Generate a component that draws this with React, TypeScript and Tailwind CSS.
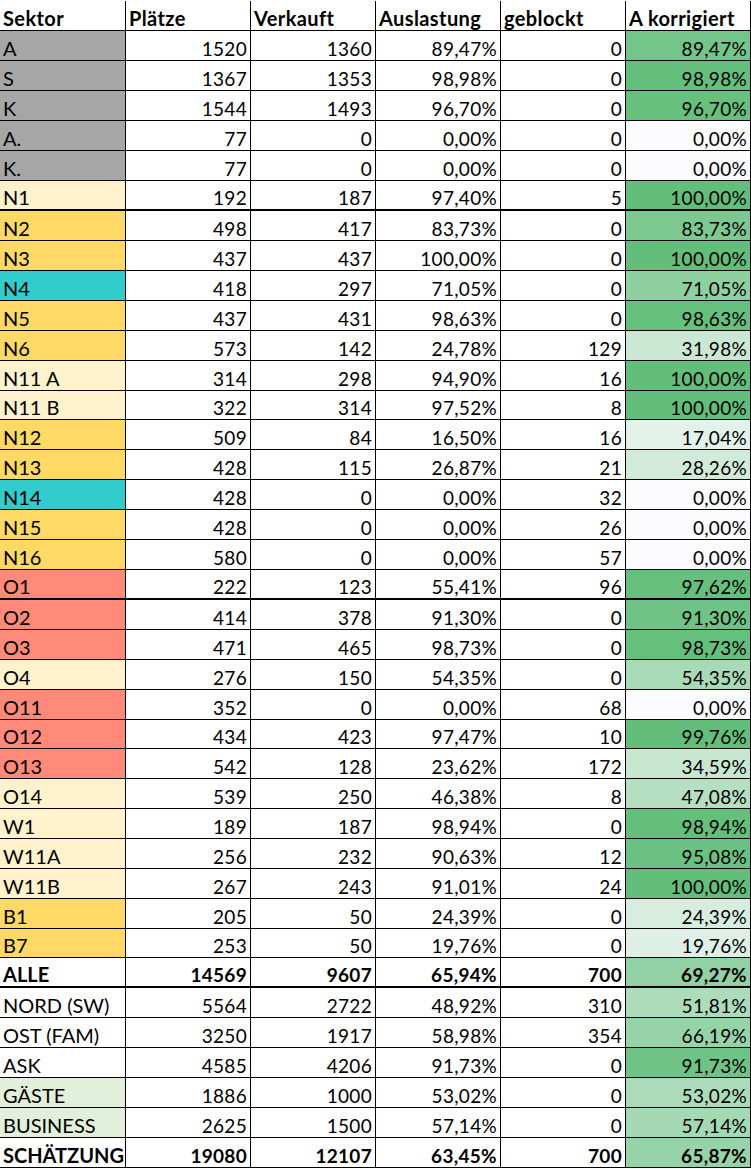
// Seat occupancy sheet per sector, laid out like the exported spreadsheet range.

type Row = {
  s: string;
  p: string;
  v: string;
  a: string;
  g: string;
  k: string;
  kv: number;
  fill?: string;
  bold?: boolean;
  thick?: boolean;
  short?: boolean;
};

const GREY = 'bg-[#a6a6a6]';
const CREAM = 'bg-[#fff2cc]';
const GOLD = 'bg-[#ffd966]';
const TEAL = 'bg-[#33cccc]';
const SALMON = 'bg-[#ff8a7a]';
const MINT = 'bg-[#e2efda]';

const rows: Row[] = [
  { s: 'A', p: '1520', v: '1360', a: '89,47%', g: '0', k: '89,47%', kv: 89.47, fill: GREY },
  { s: 'S', p: '1367', v: '1353', a: '98,98%', g: '0', k: '98,98%', kv: 98.98, fill: GREY },
  { s: 'K', p: '1544', v: '1493', a: '96,70%', g: '0', k: '96,70%', kv: 96.7, fill: GREY },
  { s: 'A.', p: '77', v: '0', a: '0,00%', g: '0', k: '0,00%', kv: 0, fill: GREY },
  { s: 'K.', p: '77', v: '0', a: '0,00%', g: '0', k: '0,00%', kv: 0, fill: GREY },
  { s: 'N1', p: '192', v: '187', a: '97,40%', g: '5', k: '100,00%', kv: 100, fill: CREAM, thick: true },
  { s: 'N2', p: '498', v: '417', a: '83,73%', g: '0', k: '83,73%', kv: 83.73, fill: GOLD },
  { s: 'N3', p: '437', v: '437', a: '100,00%', g: '0', k: '100,00%', kv: 100, fill: GOLD },
  { s: 'N4', p: '418', v: '297', a: '71,05%', g: '0', k: '71,05%', kv: 71.05, fill: TEAL },
  { s: 'N5', p: '437', v: '431', a: '98,63%', g: '0', k: '98,63%', kv: 98.63, fill: GOLD },
  { s: 'N6', p: '573', v: '142', a: '24,78%', g: '129', k: '31,98%', kv: 31.98, fill: GOLD },
  { s: 'N11 A', p: '314', v: '298', a: '94,90%', g: '16', k: '100,00%', kv: 100, fill: CREAM },
  { s: 'N11 B', p: '322', v: '314', a: '97,52%', g: '8', k: '100,00%', kv: 100, fill: CREAM, short: true },
  { s: 'N12', p: '509', v: '84', a: '16,50%', g: '16', k: '17,04%', kv: 17.04, fill: GOLD },
  { s: 'N13', p: '428', v: '115', a: '26,87%', g: '21', k: '28,26%', kv: 28.26, fill: GOLD },
  { s: 'N14', p: '428', v: '0', a: '0,00%', g: '32', k: '0,00%', kv: 0, fill: TEAL },
  { s: 'N15', p: '428', v: '0', a: '0,00%', g: '26', k: '0,00%', kv: 0, fill: GOLD },
  { s: 'N16', p: '580', v: '0', a: '0,00%', g: '57', k: '0,00%', kv: 0, fill: GOLD },
  { s: 'O1', p: '222', v: '123', a: '55,41%', g: '96', k: '97,62%', kv: 97.62, fill: SALMON, thick: true },
  { s: 'O2', p: '414', v: '378', a: '91,30%', g: '0', k: '91,30%', kv: 91.3, fill: SALMON },
  { s: 'O3', p: '471', v: '465', a: '98,73%', g: '0', k: '98,73%', kv: 98.73, fill: SALMON },
  { s: 'O4', p: '276', v: '150', a: '54,35%', g: '0', k: '54,35%', kv: 54.35, fill: CREAM },
  { s: 'O11', p: '352', v: '0', a: '0,00%', g: '68', k: '0,00%', kv: 0, fill: SALMON },
  { s: 'O12', p: '434', v: '423', a: '97,47%', g: '10', k: '99,76%', kv: 99.76, fill: SALMON, short: true },
  { s: 'O13', p: '542', v: '128', a: '23,62%', g: '172', k: '34,59%', kv: 34.59, fill: SALMON },
  { s: 'O14', p: '539', v: '250', a: '46,38%', g: '8', k: '47,08%', kv: 47.08, fill: CREAM },
  { s: 'W1', p: '189', v: '187', a: '98,94%', g: '0', k: '98,94%', kv: 98.94, fill: CREAM },
  { s: 'W11A', p: '256', v: '232', a: '90,63%', g: '12', k: '95,08%', kv: 95.08, fill: CREAM },
  { s: 'W11B', p: '267', v: '243', a: '91,01%', g: '24', k: '100,00%', kv: 100, fill: CREAM },
  { s: 'B1', p: '205', v: '50', a: '24,39%', g: '0', k: '24,39%', kv: 24.39, fill: GOLD },
  { s: 'B7', p: '253', v: '50', a: '19,76%', g: '0', k: '19,76%', kv: 19.76, fill: GOLD, short: true },
  { s: 'ALLE', p: '14569', v: '9607', a: '65,94%', g: '700', k: '69,27%', kv: 69.27, bold: true, thick: true },
  { s: 'NORD (SW)', p: '5564', v: '2722', a: '48,92%', g: '310', k: '51,81%', kv: 51.81 },
  { s: 'OST (FAM)', p: '3250', v: '1917', a: '58,98%', g: '354', k: '66,19%', kv: 66.19 },
  { s: 'ASK', p: '4585', v: '4206', a: '91,73%', g: '0', k: '91,73%', kv: 91.73 },
  { s: 'GÄSTE', p: '1886', v: '1000', a: '53,02%', g: '0', k: '53,02%', kv: 53.02, fill: MINT },
  { s: 'BUSINESS', p: '2625', v: '1500', a: '57,14%', g: '0', k: '57,14%', kv: 57.14, fill: MINT },
  { s: 'SCHÄTZUNG', p: '19080', v: '12107', a: '63,45%', g: '700', k: '65,87%', kv: 65.87, bold: true },
];

// Excel's white → green colour scale, 0 % to 100 %.
function scale(pct: number) {
  const t = Math.min(Math.max(pct / 100, 0), 1);
  const mix = (from: number, to: number) => Math.round(from + (to - from) * t);
  return `rgb(${mix(252, 99)}, ${mix(252, 190)}, ${mix(255, 123)})`;
}

const grid = 'grid grid-cols-[126px_125px_125px_125px_125px_125px] border-black';
const cell = 'flex items-end border-r border-black px-[3px] pb-[2px] leading-none';

function Num({ children, style }: { children: string; style?: React.CSSProperties }) {
  return (
    <div className={`${cell} justify-end tracking-[0.3px]`} style={style}>
      {children}
    </div>
  );
}

export default function App() {
  return (
    <div className="w-[751px] bg-white pt-px font-[Lato,sans-serif] text-[19px] text-black">
      <div className={`${grid} h-[30px] border-b text-[20px] font-bold tracking-[0.4px]`}>
        {['Sektor', 'Plätze', 'Verkauft', 'Auslastung', 'geblockt', 'A korrigiert'].map((h) => (
          <div key={h} className={cell}>
            {h}
          </div>
        ))}
      </div>

      {rows.map((r) => (
        <div
          key={r.s}
          className={`${grid} ${r.short ? 'h-[29px]' : 'h-[30px]'} ${r.thick ? 'border-b-2' : 'border-b'} ${
            r.bold ? 'font-bold' : ''
          }`}
        >
          <div className={`${cell} ${r.fill ?? 'bg-white'} text-[20px]`}>{r.s}</div>
          <Num>{r.p}</Num>
          <Num>{r.v}</Num>
          <Num>{r.a}</Num>
          <Num>{r.g}</Num>
          <Num style={{ backgroundColor: scale(r.kv) }}>{r.k}</Num>
        </div>
      ))}
    </div>
  );
}
